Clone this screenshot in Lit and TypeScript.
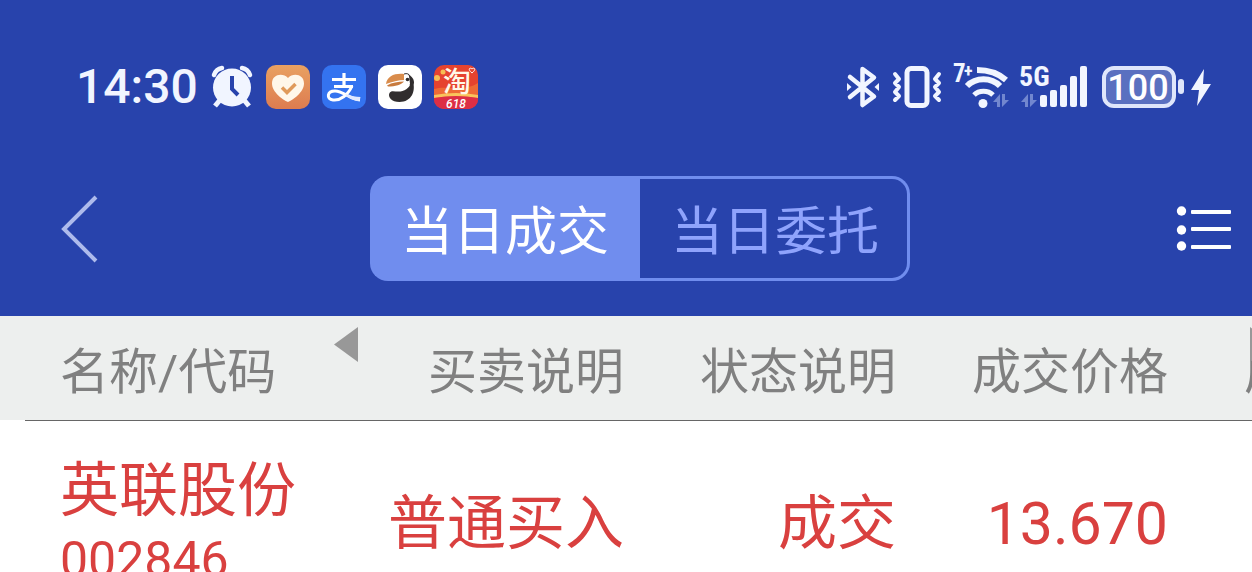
import { LitElement, html, css, svg } from "lit";
import { customElement, property, state } from "lit/decorators.js";

const sans = css`Roboto, "Noto Sans CJK SC", sans-serif`;

@customElement("status-bar")
class StatusBar extends LitElement {
  static styles = css`
    :host {
      display: flex;
      align-items: center;
      justify-content: space-between;
      height: 176px;
      padding: 0 42px 2px 76px;
      box-sizing: border-box;
      color: #f1f5ff;
      font-family: ${sans};
    }
    .group {
      display: flex;
      align-items: center;
      gap: 12px;
    }
    .time {
      font-size: 48px;
      line-height: 52px;
      font-weight: 500;
    }
    svg {
      display: block;
      flex: none;
      overflow: visible;
    }
    .small {
      font: 700 25px "Roboto Condensed", Roboto, sans-serif;
    }
    .plus {
      font-size: 18px;
    }
    .net {
      font: 700 28px "Roboto Condensed", Roboto, sans-serif;
    }
    .level {
      font: 500 36px Roboto, sans-serif;
    }
    .brand {
      font: 500 28px "Noto Sans CJK SC", sans-serif;
    }
    .promo {
      font: italic 500 12px Roboto, sans-serif;
    }
  `;

  private arrows(x: number) {
    return svg`<g fill="#7287cf" transform="translate(${x} 28)">
      <path d="M7 1v13H4V9H0zM9 1v13l7-7h-4V1z" />
    </g>`;
  }

  render() {
    return html`
      <div class="group">
        <time class="time">14:30</time>
        <svg width="44" height="44" viewBox="0 0 44 44" aria-label="闹钟">
          <g fill="none" stroke="#f1f5ff" stroke-linecap="round">
            <path d="M4 10Q6 4 12 3M32 3q6 1 8 7" stroke-width="4.500" />
            <path d="M10 35l-5 6M34 35l5 6" stroke-width="5" stroke-linecap="butt" />
          </g>
          <circle cx="22" cy="22.500" r="19" fill="#f1f5ff" />
          <path d="M22 11v13l6 6" fill="none" stroke="#2843ac" stroke-width="4" />
        </svg>
        <svg width="44" height="44" viewBox="0 0 44 44" aria-label="健康">
          <defs>
            <linearGradient id="warm" x1="0" y1="0" x2="0" y2="1">
              <stop stop-color="#e9a162" /><stop offset="1" stop-color="#dd7c50" />
            </linearGradient>
          </defs>
          <rect width="44" height="44" rx="10" fill="url(#warm)" />
          <path d="M22 37C17 35 6 27 6 18.500 6 9 17 7.500 22 13c5-5.500 16-4 16 5.500C38 27 27 35 22 37z" fill="#fff7ea" />
          <path d="M16 22.500l5 5 8.500-8.500" fill="none" stroke="#e09a5a" stroke-width="3.500" />
        </svg>
        <svg width="44" height="44" viewBox="0 0 44 44" aria-label="支付宝">
          <rect width="44" height="44" rx="10" fill="#3473f0" />
          <g fill="none" stroke="#fff" stroke-linecap="butt">
            <path d="M10 14.500h24M22 8v13M12 21.500h19" stroke-width="3.200" />
            <path d="M30 21c-4 9-12 15-19 14-7-1-6-9 2-9 8 0 15 8 25 9" stroke-width="3" />
          </g>
          <path d="M23 29c6 2 11 3 15.500 3-.5 3-1.500 4-3.500 4-5-1-9-3-12-7z" fill="#dfe8ff" />
        </svg>
        <svg width="44" height="44" viewBox="0 0 44 44" aria-label="犀鸟">
          <rect width="44" height="44" rx="10" fill="#fff" />
          <path d="M34.500 15c4 11-1 22-13 22-8 0-12-5-10-9 2-4 7 0 13-2 6-2 8-6 10-11z" fill="#302d2e" />
          <path d="M30 10c4 1 6 4 6 8l-3 6-2-6z" fill="#302d2e" />
          <path d="M8 19C9 11 17 8 26 9l1 6C20 15 14 17 8 19z" fill="#d98c4c" />
          <path d="M9 20.500c5-3 11-4 17-4-2 3-9 5-16 5z" fill="#c87a3d" />
          <path d="M26 9c2-1 4 0 5 2l1 8-4 4-2-6z" fill="#fff" />
          <path d="M26 9c3-1 5 0 6 2" fill="none" stroke="#302d2e" stroke-width="1" />
          <circle cx="29.500" cy="14.500" r="1.800" fill="#302d2e" />
        </svg>
        <svg width="44" height="44" viewBox="0 0 44 44" aria-label="淘宝">
          <defs>
            <clipPath id="tile"><rect width="44" height="44" rx="10" /></clipPath>
          </defs>
          <g clip-path="url(#tile)">
            <rect width="44" height="44" fill="#e6432f" />
            <path d="M0 24C14 20 28 28 44 18v16H0z" fill="#ee6a35" />
            <circle cx="3" cy="13" r="3" fill="#f7bd54" />
            <circle cx="9" cy="7" r="2.500" fill="#f7bd54" />
            <path d="M0 30q22-4 44 0v3q-22-3-44 0z" fill="#f9c45c" />
            <path d="M0 33q22-4 44 0v11H0z" fill="#dd2e45" />
            <path d="M38 8c-5-4-2-6 0-4 2-2 5 0 0 4z" fill="none" stroke="#fff" />
          </g>
          <text class="brand" x="23" y="27" text-anchor="middle" fill="#fff8e8">淘</text>
          <text class="promo" x="22" y="43" text-anchor="middle" fill="#fff">618</text>
        </svg>
      </div>
      <div class="group">
        <svg width="34" height="44" viewBox="0 0 34 44" aria-label="蓝牙">
          <path d="M4 12l24 19.500-11.500 8.500V4L28 12.500 4 32" fill="none" stroke="#f1f5ff" stroke-width="4.500" stroke-linejoin="round" stroke-linecap="round" />
          <path d="M1 18l4.500 4-4.500 4zM33 18l-4.500 4 4.500 4z" fill="#f1f5ff" />
        </svg>
        <svg width="50" height="44" viewBox="0 0 50 44" aria-label="振动">
          <g fill="none" stroke="#f1f5ff" stroke-linejoin="round" stroke-linecap="round">
            <rect x="15" y="3.500" width="20" height="37" rx="4" stroke-width="5" />
            <path d="M3 9l4 5-4 4 4 4-4 5 4 4-4 4M47 9l-4 5 4 4-4 4 4 5-4 4 4 4" stroke-width="4" />
          </g>
        </svg>
        <svg width="54" height="44" viewBox="0 0 54 44" aria-label="无线网络">
          <text class="small" x="-1" y="17" fill="#f1f5ff">7<tspan class="plus" x="10" y="12">+</tspan></text>
          <g fill="none" stroke="#f1f5ff" stroke-width="6">
            <path d="M23 5c11 0 21 3 29 10" />
            <path d="M13 21c9-9 24-9 33 0" />
            <path d="M20 30c5-5 14-5 19 0" stroke-width="5" />
          </g>
          <circle cx="29" cy="38.500" r="4.500" fill="#f1f5ff" />
          ${this.arrows(39)}
        </svg>
        <svg width="68" height="44" viewBox="0 0 68 44" aria-label="5G 信号">
          <text class="net" x="-1" y="21" fill="#f1f5ff">5G</text>
          ${this.arrows(1)}
          <g fill="#f1f5ff">
            <rect x="20" y="30" width="7" height="12" rx="2" />
            <rect x="30" y="25" width="7" height="17" rx="2" />
            <rect x="40" y="20" width="7" height="22" rx="2" />
            <rect x="50" y="11" width="7" height="31" rx="2" />
            <rect x="60" y="1" width="7" height="41" rx="2" />
          </g>
        </svg>
        <svg width="110" height="44" viewBox="0 0 110 44" aria-label="电量 100，正在充电">
          <rect x="4" y="3" width="70" height="38" rx="10" fill="#5a70c0" stroke="#dfe6fb" stroke-width="4" />
          <text class="level" x="38" y="35" text-anchor="middle" fill="#fff">100</text>
          <rect x="78" y="14" width="6" height="15" rx="3" fill="#dfe6fb" />
          <path d="M104 4L91 25h8l-2 16 14-22h-8z" fill="#f1f5ff" />
        </svg>
      </div>
    `;
  }
}

@customElement("title-bar")
class TitleBar extends LitElement {
  @property() active = "当日成交";

  static styles = css`
    :host {
      display: flex;
      align-items: center;
      justify-content: space-between;
      padding: 0 20px 35px 60px;
      font-family: ${sans};
    }
    button {
      border: 0;
      padding: 0;
      background: none;
      font: inherit;
      cursor: pointer;
    }
    svg {
      display: block;
    }
    .back {
      width: 44px;
    }
    .tabs {
      display: flex;
      flex: 0 1 540px;
      height: 105px;
    }
    .tab {
      flex: 1;
      box-sizing: border-box;
      padding-top: 8px;
      border: 3px solid #708dee;
      color: #8fa3fc;
      font-size: 52px;
      line-height: 60px;
      white-space: nowrap;
    }
    .tab:first-child {
      border-right-width: 0;
      border-radius: 18px 0 0 18px;
    }
    .tab:last-child {
      border-left-width: 0;
      border-radius: 0 18px 18px 0;
      padding-left: 3px;
    }
    .tab:first-child {
      padding-right: 3px;
    }
    .tab.on {
      background: #708dee;
      color: #fff;
    }
  `;

  render() {
    return html`
      <button class="back" aria-label="返回">
        <svg width="40" height="68" viewBox="0 0 40 68">
          <path d="M36 2L4 34l32 32" fill="none" stroke="#aebbec" stroke-width="4" />
        </svg>
      </button>
      <div class="tabs" role="tablist">
        ${["当日成交", "当日委托"].map(
          (name) => html`<button
            class="tab ${name === this.active ? "on" : ""}"
            role="tab"
            aria-selected=${name === this.active}
            @click=${() => (this.active = name)}
          >${name}</button>`
        )}
      </div>
      <button aria-label="菜单">
        <svg width="56" height="48" viewBox="0 0 56 48">
          <g fill="#fff">
            <circle cx="5.500" cy="6" r="4.700" />
            <circle cx="5.500" cy="25" r="4.700" />
            <circle cx="5.500" cy="41" r="4.700" />
            <rect x="15" y="5" width="40" height="4" rx="1" />
            <rect x="15" y="22" width="40" height="4" rx="1" />
            <rect x="15" y="40" width="40" height="4" rx="1" />
          </g>
        </svg>
      </button>
    `;
  }
}

@customElement("deal-table")
class DealTable extends LitElement {
  @state() private rows = [
    { name: "英联股份", code: "002846", side: "普通买入", status: "成交", price: "13.670" },
  ];

  static styles = css`
    :host {
      display: block;
      position: relative;
      overflow: hidden;
      font-family: ${sans};
    }
    table {
      width: 1440px;
      table-layout: fixed;
      border-collapse: collapse;
    }
    .first {
      width: 352px;
    }
    th,
    td {
      padding: 0;
      font-weight: 400;
      text-align: right;
      white-space: nowrap;
    }
    th {
      height: 104px;
      padding-top: 10px;
      box-sizing: border-box;
      background: #edefee;
      color: #808080;
      font-size: 49px;
      line-height: 60px;
    }
    th:first-child,
    td:first-child {
      padding-left: 60px;
      text-align: left;
    }
    .rule td {
      height: 1px;
      padding: 0 0 0 25px;
    }
    .line {
      height: 1px;
      background: #666;
    }
    .row td {
      padding-top: 34px;
      color: #d9403f;
      font-size: 59px;
      line-height: 72px;
    }
    .code {
      font-size: 50px;
      line-height: 66px;
    }
    .scroll {
      position: absolute;
      top: 11px;
      padding: 0;
      border: 0;
      background: none;
    }
    .scroll svg {
      display: block;
    }
    .prev {
      left: 334px;
    }
    .next {
      right: -22px;
    }
  `;

  render() {
    return html`
      <table>
        <thead>
          <tr>
            <th class="first">名称/代码</th>
            <th>买卖说明</th>
            <th>状态说明</th>
            <th>成交价格</th>
            <th>成交数量</th>
          </tr>
        </thead>
        <tbody>
          <tr class="rule"><td colspan="5"><div class="line"></div></td></tr>
          ${this.rows.map(
            (r) => html`<tr class="row">
              <td>
                <div>${r.name}</div>
                <div class="code">${r.code}</div>
              </td>
              <td>${r.side}</td>
              <td>${r.status}</td>
              <td>${r.price}</td>
              <td></td>
            </tr>`
          )}
        </tbody>
      </table>
      <button class="scroll prev" aria-label="向左">
        <svg width="24" height="36" viewBox="0 0 24 36"><path d="M24 0v35L0 17.500z" fill="#989898" /></svg>
      </button>
      <button class="scroll next" aria-label="向右">
        <svg width="24" height="36" viewBox="0 0 24 36"><path d="M0 0v35l24-17.500z" fill="#989898" /></svg>
      </button>
    `;
  }
}

@customElement("app-root")
class AppRoot extends LitElement {
  static styles = css`
    :host {
      display: block;
      height: 100vh;
      overflow: hidden;
      background: #fff;
    }
    .top {
      background: #2843ac;
    }
  `;

  render() {
    return html`
      <header class="top">
        <status-bar></status-bar>
        <title-bar></title-bar>
      </header>
      <deal-table></deal-table>
    `;
  }
}
